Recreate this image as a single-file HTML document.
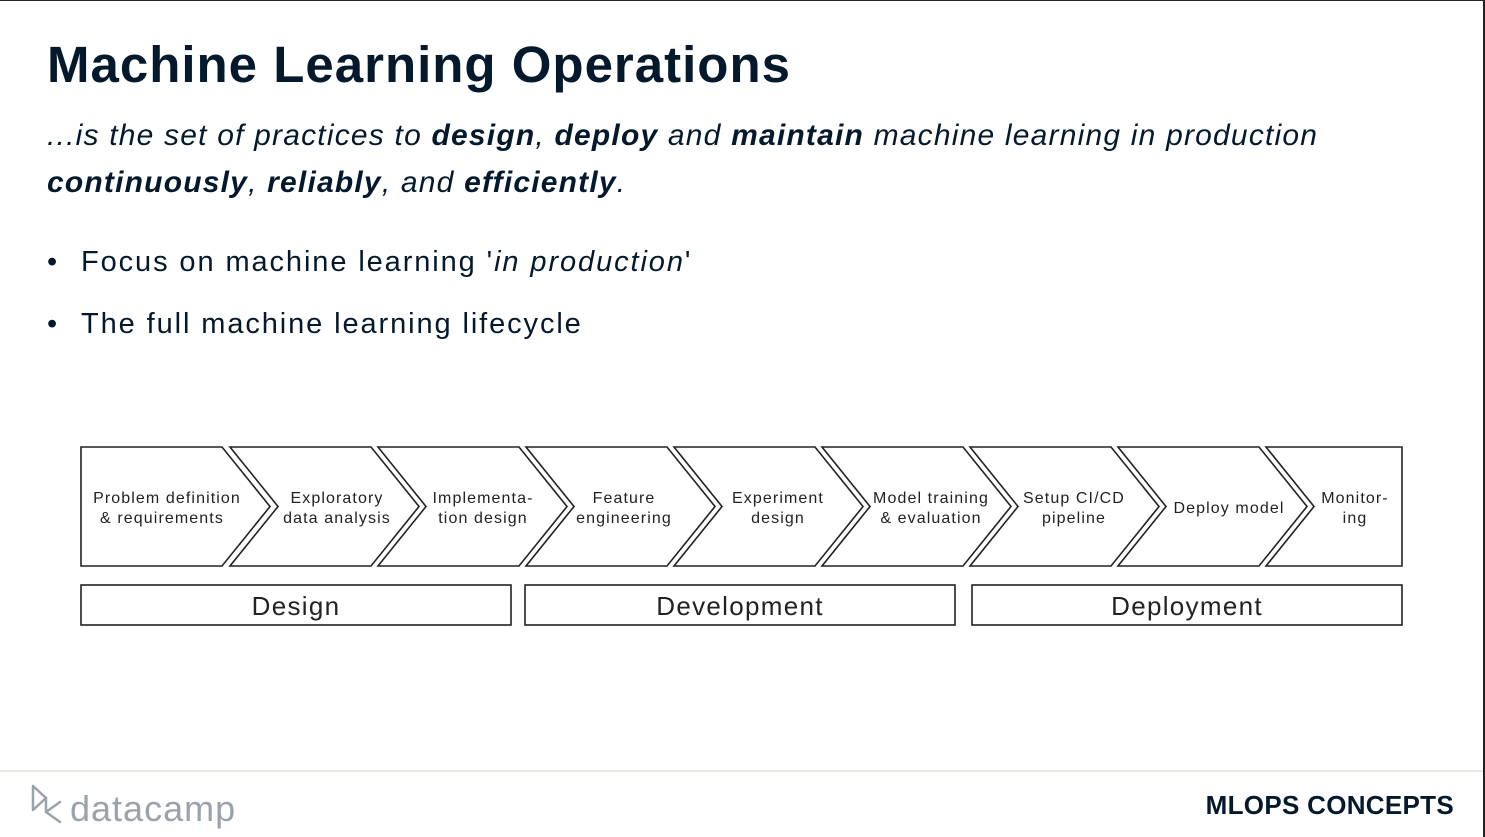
<!DOCTYPE html>
<html><head><meta charset="utf-8"><style>
body{margin:0;width:1485px;height:837px;background:#fff;position:relative;overflow:hidden;font-family:"Liberation Sans",sans-serif;color:#05192d}
.b{position:absolute;left:0;top:0;width:1485px;height:837px;border-top:1px solid #222;border-right:2px solid #222;box-sizing:border-box}
h1{position:absolute;left:47px;top:35px;margin:0;font-size:51px;font-weight:bold;letter-spacing:1px}
.p{position:absolute;left:47px;font-size:30px;font-style:italic;letter-spacing:1.2px}
.li{position:absolute;left:47px;font-size:29px;letter-spacing:1.9px}
.li span.d{display:inline-block;width:34px}
.foot{position:absolute;left:0;top:770px;width:1483px;border-top:2px solid #ece9e4}
</style></head><body>
<div class="b"></div>
<h1>Machine Learning Operations</h1>
<div class="p" style="top:119px">...is the set of practices to <b>design</b>, <b>deploy</b> and <b>maintain</b> machine learning in production</div>
<div class="p" style="top:166px"><b>continuously</b>, <b>reliably</b>, and <b>efficiently</b>.</div>
<div class="li" style="top:246px"><span class="d">•</span>Focus on machine learning '<i>in production</i>'</div>
<div class="li" style="top:308px"><span class="d">•</span>The full machine learning lifecycle</div>
<svg style="position:absolute;left:0;top:0" width="1485" height="837" font-family="Liberation Sans, sans-serif" fill="none" stroke="#222" stroke-width="1.6">
<path d="M81,447 L222,447 L270,506.5 L222,566 L81,566 Z"/>
<path d="M230,447 L371,447 L419,506.5 L371,566 L230,566 L278,506.5 Z"/>
<path d="M378,447 L519,447 L567,506.5 L519,566 L378,566 L426,506.5 Z"/>
<path d="M526,447 L667,447 L715,506.5 L667,566 L526,566 L574,506.5 Z"/>
<path d="M674,447 L815,447 L863,506.5 L815,566 L674,566 L722,506.5 Z"/>
<path d="M822,447 L963,447 L1011,506.5 L963,566 L822,566 L870,506.5 Z"/>
<path d="M970,447 L1111,447 L1159,506.5 L1111,566 L970,566 L1018,506.5 Z"/>
<path d="M1118,447 L1259,447 L1307,506.5 L1259,566 L1118,566 L1166,506.5 Z"/>
<path d="M1266,447 L1402,447 L1402,566 L1266,566 L1314,506.5 Z"/>
<rect x="81" y="585" width="430" height="40"/>
<rect x="525" y="585" width="430" height="40"/>
<rect x="972" y="585" width="430" height="40"/>
<g fill="#222" stroke="none" font-size="16" text-anchor="middle" letter-spacing="1.1">
<text x="167" y="503">Problem definition</text><text x="162" y="523">&amp; requirements</text>
<text x="337" y="503">Exploratory</text><text x="337" y="523">data analysis</text>
<text x="483" y="503">Implementa-</text><text x="483" y="523">tion design</text>
<text x="624" y="503">Feature</text><text x="624" y="523">engineering</text>
<text x="778" y="503">Experiment</text><text x="778" y="523">design</text>
<text x="931" y="503">Model training</text><text x="931" y="523">&amp; evaluation</text>
<text x="1074" y="503">Setup CI/CD</text><text x="1074" y="523">pipeline</text>
<text x="1229" y="513">Deploy model</text>
<text x="1355" y="503">Monitor-</text><text x="1355" y="523">ing</text>
<g font-size="26" letter-spacing="1.3"><text x="296" y="615">Design</text><text x="740" y="615">Development</text><text x="1187" y="615">Deployment</text></g>
</g>
<g stroke="#9aa2aa" stroke-width="2.5" stroke-linecap="round" stroke-linejoin="round">
<path d="M33,786 L33,810 L46,798 Z"/><path d="M46,798 L46,812 L60,822 M46,812 L60,802"/>
</g>
<text x="70" y="821" fill="#9aa2aa" stroke="none" font-size="36" letter-spacing="1">datacamp</text>
</svg>
<div class="foot"></div>
<div style="position:absolute;right:31px;top:790px;font-size:26px;font-weight:bold;letter-spacing:0.3px">MLOPS CONCEPTS</div>
</body></html>
